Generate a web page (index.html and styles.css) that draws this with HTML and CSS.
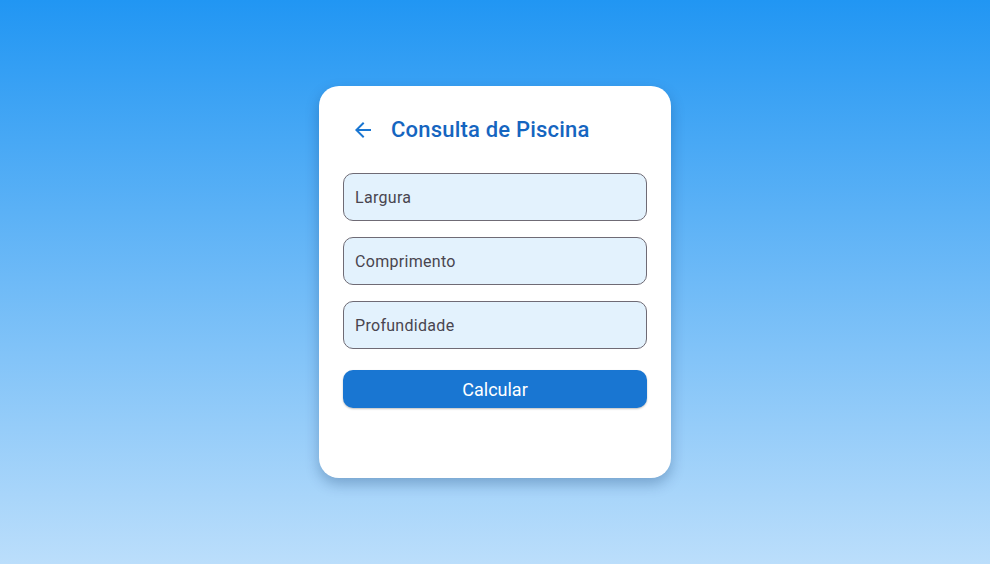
FILE: index.html
```html
<!DOCTYPE html>
<html>
<head>
<meta charset="utf-8">
<link rel="stylesheet" href="styles.css">
</head>
<body>
<div class="page">
  <div class="card">
    <div class="header">
      <span class="back">
        <svg width="24" height="24" viewBox="0 0 24 24"><path fill="#1976D2" d="M20 11H7.83l5.59-5.59L12 4l-8 8 8 8 1.41-1.41L7.83 13H20v-2z"/></svg>
      </span>
      <h1 class="title">Consulta de Piscina</h1>
    </div>
    <div class="fields">
      <div class="field">Largura</div>
      <div class="field">Comprimento</div>
      <div class="field">Profundidade</div>
    </div>
    <button class="btn">Calcular</button>
  </div>
</div>
</body>
</html>
```
FILE: styles.css
```css
html, body {
  margin: 0;
  padding: 0;
  height: 100%;
}
body {
  font-family: Roboto, "Noto Sans", sans-serif;
}
.page {
  height: 564px;
  background: linear-gradient(to bottom, #2196F3 0%, #BBDEFB 100%);
  display: flex;
  align-items: center;
  justify-content: center;
}
.card {
  width: 352px;
  height: 392px;
  box-sizing: border-box;
  background: #fff;
  border-radius: 20px;
  padding: 24px;
  box-shadow: 0 6px 14px rgba(0, 40, 90, 0.28);
  display: flex;
  flex-direction: column;
}
.header {
  height: 39px;
  display: flex;
  align-items: center;
  margin-bottom: 24px;
}
.back {
  width: 24px;
  height: 24px;
  margin-left: 8px;
  margin-right: 16px;
  display: flex;
}
.title {
  margin: 0;
  font-size: 22px;
  font-weight: 500;
  color: #1565C0;
  line-height: 1;
  letter-spacing: 0.2px;
}
.fields {
  display: flex;
  flex-direction: column;
  gap: 16px;
}
.field {
  height: 48px;
  box-sizing: border-box;
  border: 1px solid #6f6b75;
  border-radius: 10px;
  background: #E3F2FD;
  display: flex;
  align-items: center;
  padding-left: 11px;
  font-size: 16px;
  color: #49454F;
  letter-spacing: 0.3px;
}
.btn {
  margin-top: 21px;
  height: 38px;
  border: none;
  border-radius: 10px;
  background: #1976D2;
  color: #fff;
  font-family: Roboto, sans-serif;
  font-size: 18px;
  font-weight: 400;
  box-shadow: 0 1px 2px rgba(0,0,0,0.25);
}
```
